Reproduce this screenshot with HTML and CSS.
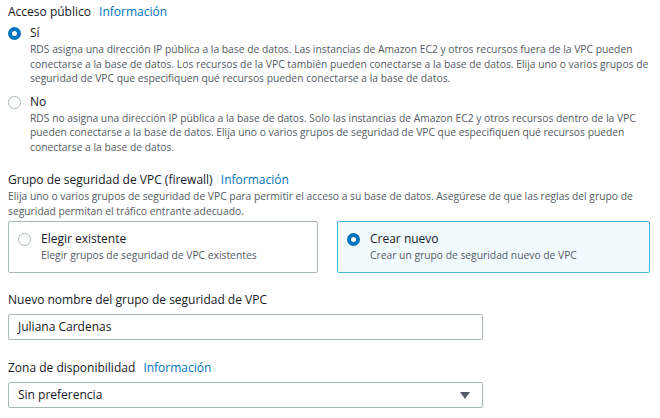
FILE: index.html
```html
<!DOCTYPE html>
<html lang="es">
<head>
<meta charset="utf-8">
<link rel="stylesheet" href="styles.css">
</head>
<body>
<div class="page">
  <section class="field">
    <div class="label">Acceso público <a class="info">Información</a></div>
    <div class="radio-group">
      <div class="option">
        <span class="radio checked"></span>
        <div class="opt-body">
          <div class="opt-title">Sí</div>
          <div class="desc">RDS asigna una dirección IP pública a la base de datos. Las instancias de Amazon EC2 y otros recursos fuera de la VPC pueden conectarse a la base de datos. Los recursos de la VPC también pueden conectarse a la base de datos. Elija uno o varios grupos de seguridad de VPC que especifiquen qué recursos pueden conectarse a la base de datos.</div>
        </div>
      </div>
      <div class="option">
        <span class="radio"></span>
        <div class="opt-body">
          <div class="opt-title">No</div>
          <div class="desc">RDS no asigna una dirección IP pública a la base de datos. Solo las instancias de Amazon EC2 y otros recursos dentro de la VPC pueden conectarse a la base de datos. Elija uno o varios grupos de seguridad de VPC que especifiquen qué recursos pueden conectarse a la base de datos.</div>
        </div>
      </div>
    </div>
  </section>

  <section class="field sg">
    <div class="label">Grupo de seguridad de VPC (firewall) <a class="info">Información</a></div>
    <div class="desc">Elija uno o varios grupos de seguridad de VPC para permitir el acceso a su base de datos. Asegúrese de que las reglas del grupo de seguridad permitan el tráfico entrante adecuado.</div>
    <div class="tiles">
      <div class="tile">
        <span class="radio"></span>
        <div class="opt-body">
          <div class="opt-title">Elegir existente</div>
          <div class="desc">Elegir grupos de seguridad de VPC existentes</div>
        </div>
      </div>
      <div class="tile selected">
        <span class="radio checked"></span>
        <div class="opt-body">
          <div class="opt-title">Crear nuevo</div>
          <div class="desc">Crear un grupo de seguridad nuevo de VPC</div>
        </div>
      </div>
    </div>
  </section>

  <section class="field name">
    <div class="label">Nuevo nombre del grupo de seguridad de VPC</div>
    <div class="input">Juliana Cardenas</div>
  </section>

  <section class="field zone">
    <div class="label">Zona de disponibilidad <a class="info">Información</a></div>
    <div class="input select">
      <span>Sin preferencia</span>
      <svg class="caret" width="10" height="7" viewBox="0 0 10 7"><path d="M0 0H10L5 7Z" fill="#545b64"/></svg>
    </div>
  </section>
</div>
</body>
</html>
```

FILE: styles.css
```css
* { box-sizing: border-box; }
body {
  margin: 0;
  background: #fff;
  font-family: "Open Sans", "Noto Sans", Arial, sans-serif;
  color: #16191f;
}
.page {
  padding: 3px 10px 0 8px;
  width: 660px;
}
.label {
  font-size: 12px;
  line-height: 18px;
  color: #16191f;
}
.info {
  color: #0073bb;
  margin-left: 5px;
}
.desc {
  font-size: 10.3px;
  line-height: 14.5px;
  color: #545b64;
}
.radio-group {
  margin-top: 3px;
  display: flex;
  flex-direction: column;
  gap: 7px;
}
.option {
  display: flex;
  gap: 9px;
}
.radio {
  flex: none;
  width: 13px;
  height: 13px;
  border-radius: 50%;
  border: 1.5px solid #aab7b8;
  background: #fff;
  margin-top: 3px;
}
.radio.checked {
  border: 4px solid #0073bb;
}
.opt-title {
  font-size: 12px;
  line-height: 18px;
}
.sg { margin-top: 17px; }
.tiles {
  margin-top: 3px;
  display: grid;
  grid-template-columns: 310px 313px;
  gap: 19px;
}
.tile {
  display: flex;
  gap: 10px;
  border: 1px solid #aab7b8;
  border-radius: 2px;
  padding: 8px 10px 10px 9px;
  height: 52px;
}
.tile.selected {
  border-color: #44b9d6;
  background: #f1faff;
}
.name { margin-top: 18px; }
.input {
  margin-top: 5px;
  width: 475px;
  height: 26px;
  border: 1px solid #aab7b8;
  border-radius: 2px;
  padding: 0 9px;
  font-size: 12px;
  line-height: 24px;
  color: #16191f;
}
.zone { margin-top: 19px; }
.select {
  display: flex;
  justify-content: space-between;
  align-items: center;
}
.caret { margin-right: 3px; }
```
